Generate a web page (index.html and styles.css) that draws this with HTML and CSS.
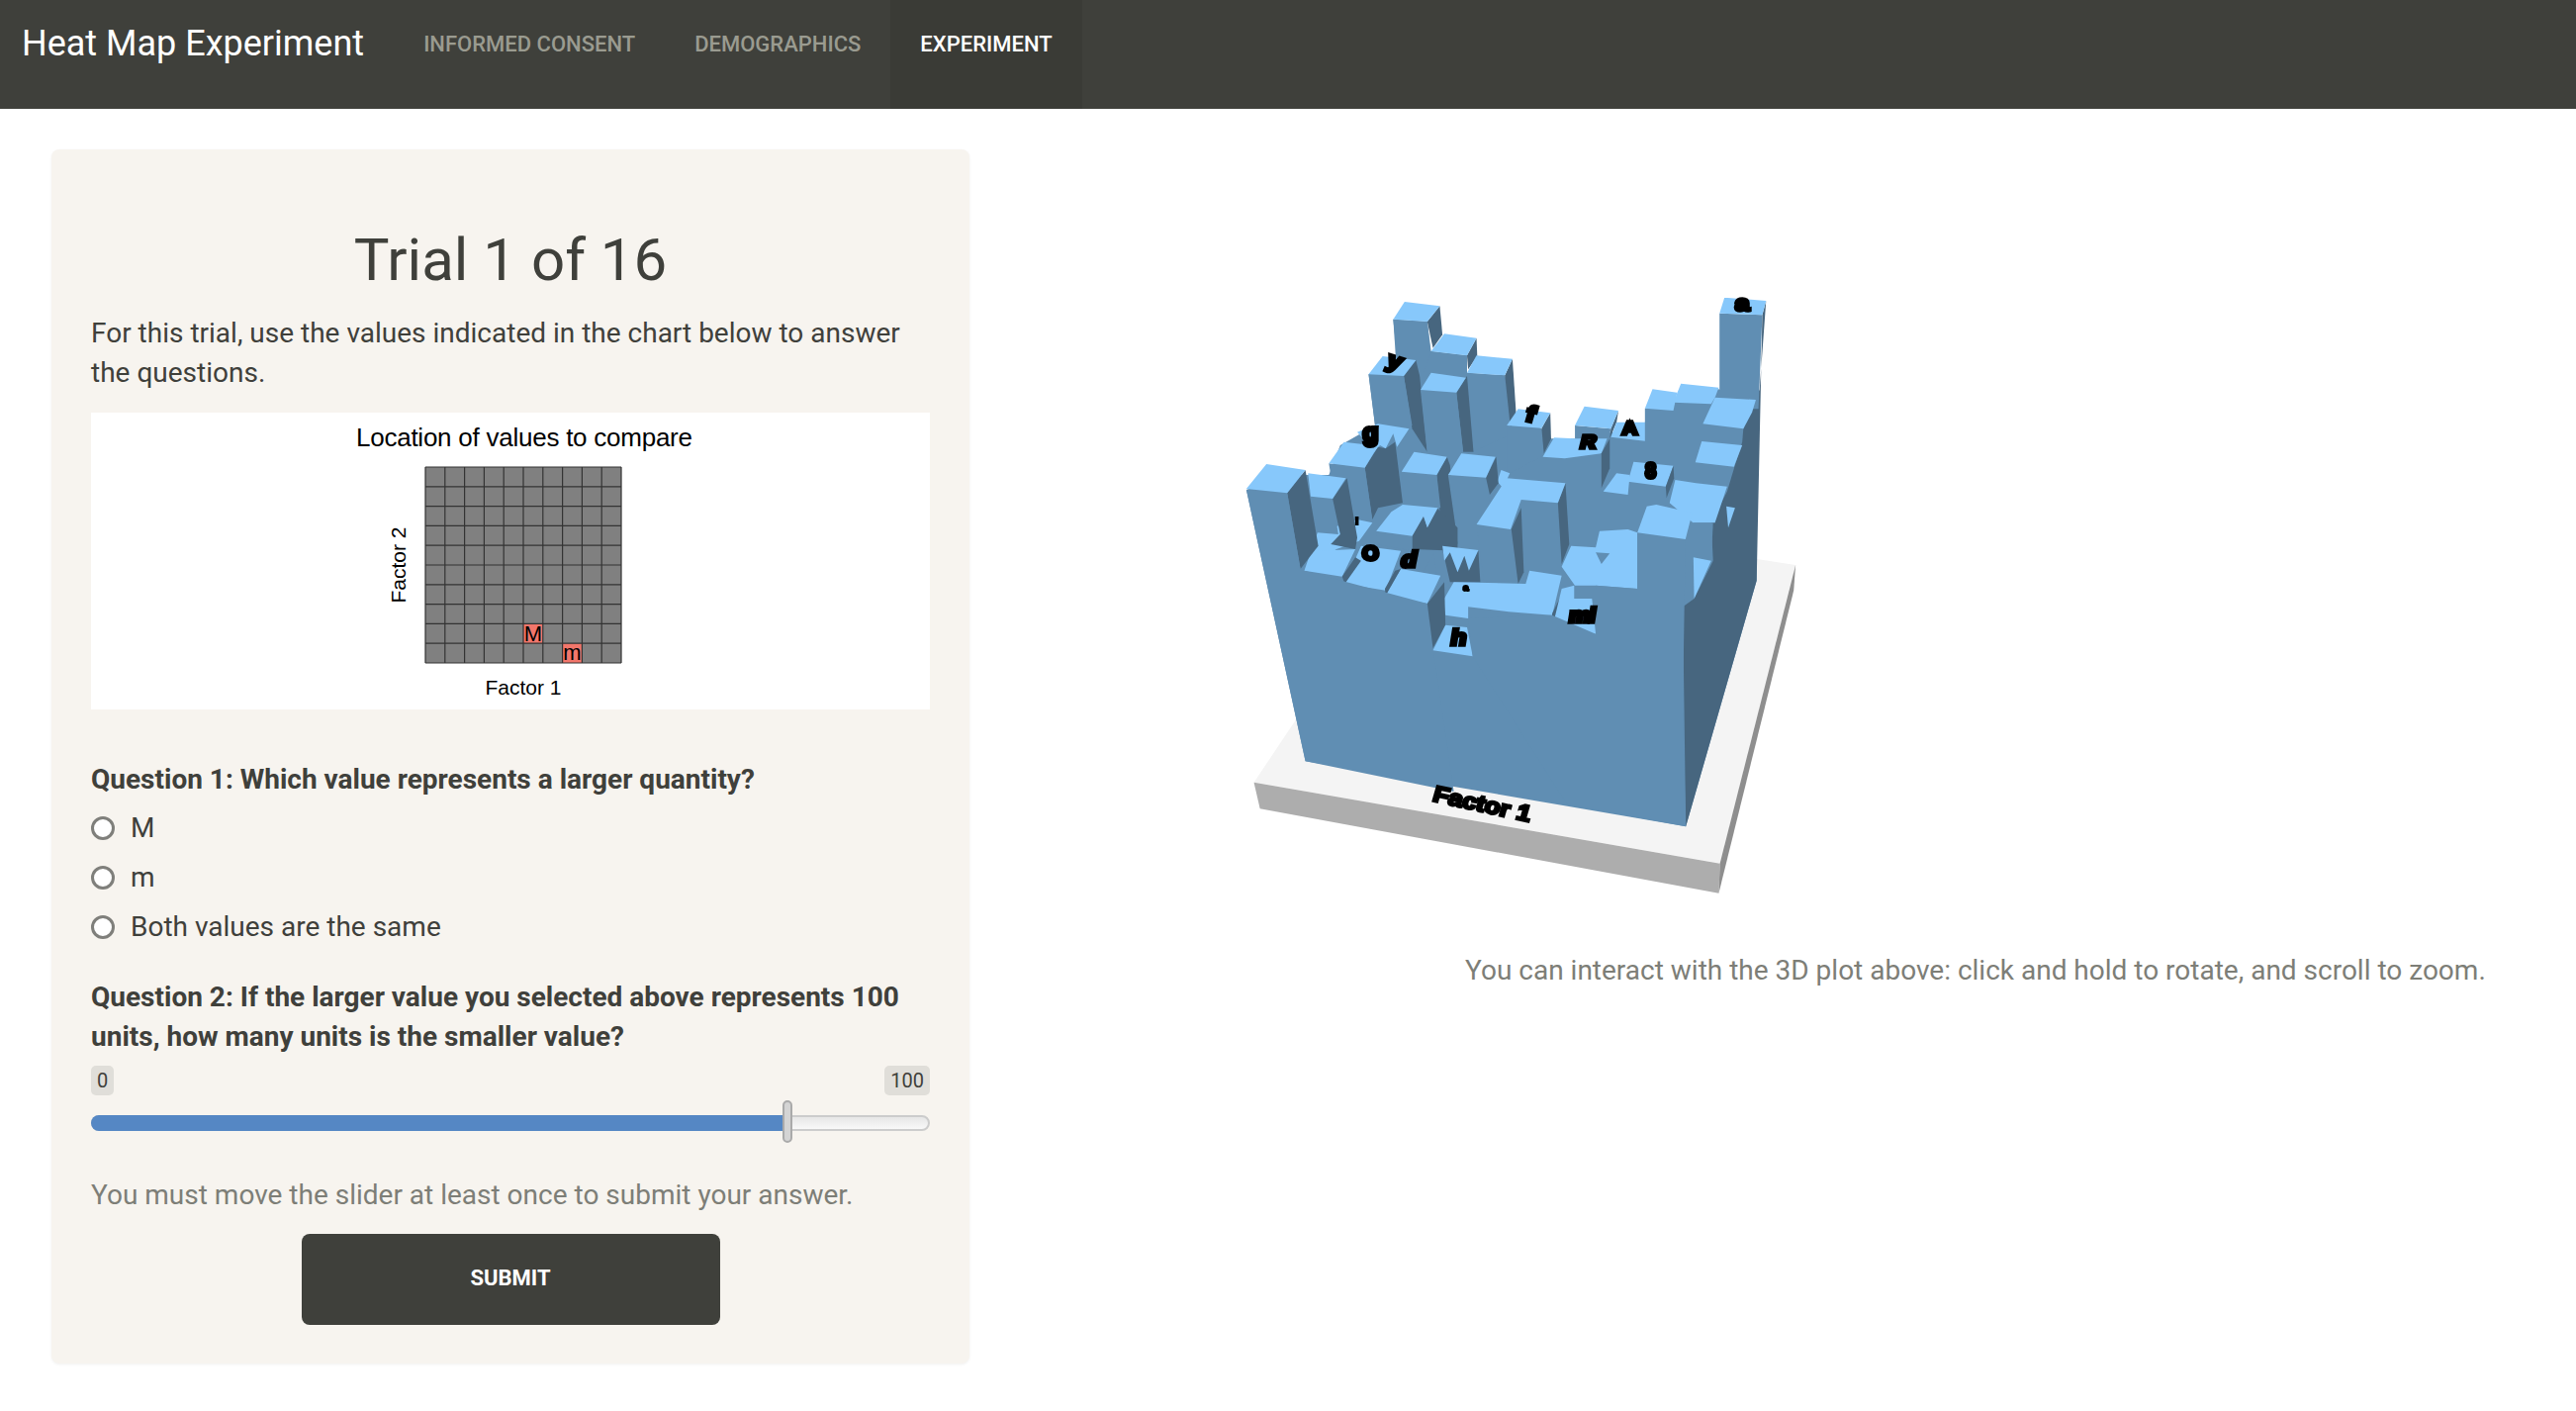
FILE: index.html
```html
<!DOCTYPE html>
<html>
	<head>
		<meta charset="utf-8" />
		<title>Heat Map Experiment</title>
		<link rel="stylesheet" href="styles.css">
	</head>
	<body>
		<div class="topbar">
			<a class="brand" href="#">Heat Map Experiment</a>
			<a class="nav-link" href="#">INFORMED CONSENT</a>
			<a class="nav-link" href="#">DEMOGRAPHICS</a>
			<a class="nav-link active" href="#">EXPERIMENT</a>
		</div>
		<div class="main">
			<div class="card">
				<h1>Trial 1 of 16</h1>
				<p class="intro">For this trial, use the values indicated in the chart below to answer the questions.</p>
				<div class="chart-box">
					<svg class="chart" width="848" height="300" viewBox="0 0 848 300">
						<text class="chart-title" x="268" y="34" textLength="340">Location of values to compare</text>
						<rect x="338" y="55" width="198" height="198" fill="#808080"/>
						<rect x="437" y="213.4" width="19.8" height="19.8" fill="#f2766b"/>
						<rect x="476.6" y="233.2" width="19.8" height="19.8" fill="#f2766b"/>
						<path class="grid-lines" d="M338 55V253M357.8 55V253M377.6 55V253M397.4 55V253M417.2 55V253M437 55V253M456.8 55V253M476.6 55V253M496.4 55V253M516.2 55V253M536 55V253M338 55H536M338 74.8H536M338 94.6H536M338 114.4H536M338 134.2H536M338 154H536M338 173.8H536M338 193.6H536M338 213.4H536M338 233.2H536M338 253H536"/>
						<text class="chart-cell" x="446.9" y="231">M</text>
						<text class="chart-cell" x="486.5" y="250">m</text>
						<text class="chart-axis" x="437" y="285">Factor 1</text>
						<text class="chart-axis" transform="translate(318 154) rotate(-90)">Factor 2</text>
					</svg>
				</div>
				<div class="question q1">Question 1: Which value represents a larger quantity?</div>
				<div class="options">
					<label class="option"><input type="radio" name="q1"> M</label>
					<label class="option"><input type="radio" name="q1"> m</label>
					<label class="option"><input type="radio" name="q1"> Both values are the same</label>
				</div>
				<div class="question q2">Question 2: If the larger value you selected above represents 100 units, how many units is the smaller value?</div>
				<div class="slider-labels">
					<span>0</span>
					<span>100</span>
				</div>
				<div class="slider">
					<div class="slider-fill" style="width:82.8%"></div>
					<div class="slider-handle" style="left:82.6%"></div>
				</div>
				<p class="hint">You must move the slider at least once to submit your answer.</p>
				<button class="submit">SUBMIT</button>
			</div>
			<div class="plot-col">
				<svg class="plot" width="600" height="640" viewBox="0 0 1568 1920" preserveAspectRatio="none">
					<defs>
						<filter id="soft" x="-5%" y="-5%" width="110%" height="110%"><feGaussianBlur stdDeviation="1.6"/></filter>
					</defs>
					<g filter="url(#soft)">
						<!-- base -->
						<polygon fill="#f4f4f4" points="72,1532 190,1330 1400,855 1503,873 1303,1778"/>
						<polygon fill="#adadad" points="72,1532 1303,1778 1300,1868 88,1612"/>
						<polygon fill="#8e8e8e" points="1503,873 1498,950 1300,1868 1303,1778"/>

						<!-- interior mass -->
						<polygon class="f" points="450,240 440,128 530,135 540,225 635,238 635,290 735,298 765,420 830,458 857,490 920,490 1020,470 1105,440 1105,398 1180,380 1200,340 1300,340 1400,400 1400,920 1213,1666 208,1468 52,645 160,600 270,600 300,510 392,450 375,295"/>
						<polygon class="s" points="1425,72 1415,115 1400,920 1213,1666 1205,1000 1235,975 1285,860 1280,745 1322,650 1343,570 1362,500 1365,460 1398,372 1408,340"/>

						<!-- back row -->
						<polygon class="f" points="1302,110 1415,115 1405,400 1302,400"/>
						<polygon class="t" points="1315,62 1425,72 1415,115 1302,110"/>
						<polygon class="f" points="440,128 530,135 545,300 450,300"/>
						<polygon class="s" points="563,88 530,135 545,215 570,175"/>
						<polygon class="t" points="470,75 563,88 530,135 440,128"/>
						<polygon class="f" points="540,225 635,238 635,290 520,290"/>
						<polygon class="s" points="660,185 635,238 638,280 662,240"/>
						<polygon class="t" points="575,172 660,185 635,238 540,225"/>
						<polygon class="f" points="635,290 735,298 745,480 650,530"/>
						<polygon class="s" points="755,248 735,298 750,460 765,420"/>
						<polygon class="t" points="660,238 755,248 735,298 635,290"/>
						<polygon class="s" points="500,252 468,300 490,460 530,530 510,300"/>
						<polygon class="f" points="375,295 468,300 490,450 392,450"/>
						<polygon class="t" points="412,240 500,252 468,300 375,295"/>
						<polygon class="s" points="632,305 607,350 625,530 652,530 635,300"/>
						<polygon class="f" points="512,342 607,350 625,535 530,535"/>
						<polygon class="t" points="540,290 632,305 607,350 512,342"/>

						<!-- second row -->
						<polygon class="t" points="345,470 400,445 482,460 450,515 440,475 420,520 405,510 390,530"/>
						<polygon class="s" points="400,515 365,578 385,735 400,700 465,685 445,500 420,520"/>
						<polygon class="f" points="270,565 365,578 385,740 295,740"/>
						<polygon class="t" points="310,500 400,512 365,578 270,565"/>
						<polygon class="f" points="740,450 832,458 838,540 740,600"/>
						<polygon class="s" points="855,412 832,458 838,535 857,490"/>
						<polygon class="t" points="770,400 855,412 832,458 740,450"/>
						<polygon class="f" points="920,450 1015,460 1010,490 920,490"/>
						<polygon class="s" points="1035,405 1015,460 1012,490 1030,440"/>
						<polygon class="t" points="945,392 1035,405 1015,460 920,450"/>
						<polygon class="t" points="1030,440 1105,440 1105,497 1015,485"/>
						<polygon class="t" points="865,487 920,490 1005,490 990,535 893,550 835,545"/>
						<polygon class="s" points="1012,490 990,535 990,640 1012,580"/>
						<polygon class="t" points="1125,340 1190,350 1180,405 1105,398"/>
						<polygon class="t" points="1200,323 1300,335 1290,365 1280,385 1180,380"/>
						<polygon class="t" points="1290,365 1398,372 1388,410 1365,460 1258,445"/>
						<polygon class="t" points="1255,498 1362,510 1340,575 1238,562"/>
						<polygon class="t" points="1075,560 1180,572 1160,635 1060,620"/>
						<polygon class="s" points="1180,572 1160,635 1162,670 1182,610"/>
						<polygon class="t" points="1030,595 1065,600 1060,660 995,650"/>
						<polygon class="t" points="1185,615 1240,625 1322,635 1290,745 1232,745 1170,685"/>
						<polygon class="f" points="1232,745 1285,745 1280,860 1232,850"/>
						<polygon class="t" points="1320,695 1343,700 1325,760"/>
						<polygon class="t" points="725,585 748,595 730,640 715,620"/>

						<!-- third row -->
						<polygon class="s" points="582,545 555,600 565,740 610,810 590,570"/>
						<polygon class="f" points="462,590 555,600 565,700 470,700"/>
						<polygon class="t" points="495,530 582,545 555,600 462,590"/>
						<polygon class="f" points="585,600 685,608 695,690 610,800"/>
						<polygon class="s" points="712,545 685,608 695,660 718,625"/>
						<polygon class="t" points="620,535 710,545 685,608 585,600"/>
						<polygon class="f" points="778,675 875,685 885,890 780,930"/>
						<polygon class="f" points="660,750 750,765 768,930 680,930"/>
						<polygon class="s" points="895,625 875,685 885,870 905,810"/>
						<polygon class="s" points="778,700 752,765 770,930 785,895"/>
						<polygon class="t" points="740,610 895,625 875,685 778,675 750,765 660,750"/>

						<!-- left cluster -->
						<polygon class="t" points="240,775 345,735 385,745 350,800 290,825 205,890"/>
						<polygon class="f" points="222,665 280,672 295,780 240,775"/>
						<polygon class="s" points="318,610 280,672 300,780 275,810 340,825 345,790"/>
						<polygon class="t" points="215,595 315,610 280,672 222,665"/>
						<polygon class="s" points="520,725 490,785 490,825 610,830 610,760 555,700 530,760"/>
						<polygon class="f" points="395,770 490,785 490,830 395,810"/>
						<polygon class="t" points="395,770 435,712 465,690 558,700 530,760 520,725 490,785"/>

						<!-- teeth -->
						<polygon class="s" points="570,825 665,830 670,925 590,925"/>
						<polygon class="t" points="570,815 665,828 640,890 628,845 610,895 590,835 575,860"/>
						<polygon class="f" points="548,838 555,905 515,900"/>

						<!-- front row -->
						<polygon class="t" points="240,830 340,825 305,908 205,890"/>
						<polygon class="t" points="355,815 460,830 420,950 312,930"/>
						<polygon class="t" points="460,885 565,905 530,990 420,965"/>
						<polygon class="s" points="355,860 312,930 305,908 340,850"/>
						<polygon class="s" points="460,885 420,965 418,945 445,890"/>
						<polygon class="s" points="208,585 160,655 195,885 242,815"/>
						<polygon class="f" points="52,645 160,655 195,885 205,890 530,990 545,1125 600,1560 208,1468"/>
						<polygon class="t" points="105,567 208,585 160,655 52,642"/>

						<!-- middle stair -->
						<polygon class="t" points="600,925 790,930 800,890 885,905 860,1025 745,1015 638,1000 638,1035 578,1025 572,980"/>
						<polygon class="s" points="575,925 530,990 545,1125 578,1055"/>
						<polygon class="t" points="578,1055 635,1062 650,1150 545,1132"/>
						<polygon class="s" points="890,950 860,1065 860,1020"/>
						<polygon class="t" points="885,945 918,935 918,975 965,975 975,1082 860,1065"/>
						<polygon class="t" points="985,770 1060,765 1085,775 1085,945 975,935 920,935 885,878 910,815 975,820"/>
						<polygon class="f" points="975,835 1012,838 990,870"/>
						<polygon class="f" points="1085,775 1212,795 1205,1300 1213,1666 900,1600 650,1150 638,1035 860,1025 975,1082 975,935 1085,945"/>
						<polygon class="t" points="1135,690 1230,715 1212,795 1085,775 1110,695"/>
						<polygon class="t" points="1233,850 1280,860 1235,975"/>

						<!-- labels -->
						<text class="bar-label" transform="translate(1362 102)">a</text>
						<text class="bar-label" transform="translate(437 276) rotate(20)">y</text>
						<text class="bar-label" transform="translate(798 438) rotate(14)">f</text>
						<text class="bar-label caps" transform="translate(1065 478)">A</text>
						<text class="bar-label caps" transform="translate(952 520) skewX(-12)">R</text>
						<text class="bar-label caps" transform="translate(1120 608) scale(.9 1.15)">8</text>
						<text class="bar-label" transform="translate(380 498) scale(1 1.1)">g</text>
						<text class="bar-label caps" transform="translate(380 858) scale(1 1.1)">O</text>
						<text class="bar-label" transform="translate(478 880) skewX(-10)">d</text>
						<text class="bar-label small" transform="translate(632 950)">a</text>
						<text class="bar-label small" transform="translate(344 750)">i</text>
						<text class="bar-label tight" transform="translate(935 1046) skewX(-8)">mi</text>
						<text class="bar-label" transform="translate(610 1115) skewX(-8)">h</text>
						<text class="base-label" transform="translate(670 1620) rotate(14)">Factor 1</text>
					</g>
				</svg>
				<p class="caption">You can interact with the 3D plot above: click and hold to rotate, and scroll to zoom.</p>
			</div>
		</div>
	</body>
</html>
```

FILE: styles.css
```css
html,body{margin:0;padding:0}
body{
	background:#fff;
	color:#3f403b;
	font-family:Roboto,"Liberation Sans",sans-serif;
	font-size:28px;
	line-height:40px;
}
p{margin:0}
.topbar{
	display:flex;
	height:110px;
	background:#3f403b;
}
.brand{
	padding:0 30px 0 22px;
	color:#fff;
	font-size:36px;
	line-height:88px;
	text-decoration:none;
}
.nav-link{
	padding:0 30px;
	color:#9a9b90;
	font-size:22px;
	font-weight:500;
	line-height:90px;
	text-decoration:none;
}
.nav-link.active{
	background:#3a3b36;
	color:#fff;
}
.main{
	display:flex;
	padding:41px 52px 48px;
}
.card{
	width:848px;
	padding:40px 40px 39px;
	background:#f7f4ef;
	border-radius:8px;
	box-shadow:0 1px 3px rgba(0,0,0,.06);
}
h1{
	margin:39px 0 21px;
	font-size:60px;
	font-weight:400;
	line-height:66px;
	text-align:center;
}
.chart-box{
	height:300px;
	margin-top:20px;
	background:#fff;
}
.chart{display:block}
.chart-title{
	font-family:"Liberation Sans",sans-serif;
	font-size:26px;
}
.chart-cell{
	font-family:"Liberation Sans",sans-serif;
	font-size:22px;
	text-anchor:middle;
}
.chart-axis{
	font-family:"Liberation Sans",sans-serif;
	font-size:21px;
	text-anchor:middle;
}
.grid-lines{
	fill:none;
	stroke:#333;
	stroke-width:1.2;
}
.question{
	font-weight:700;
}
.q1{margin-top:51px}
.q2{margin-top:26px}
.options{margin-top:4px}
.option{
	display:flex;
	align-items:center;
	gap:16px;
	height:50px;
}
.option input{
	appearance:none;
	box-sizing:border-box;
	width:24px;
	height:24px;
	margin:0;
	background:#fff;
	border:3px solid #7f7f7b;
	border-radius:50%;
}
.slider-labels{
	display:flex;
	justify-content:space-between;
	margin-top:9px;
}
.slider-labels span{
	height:30px;
	padding:0 6px;
	background:#e0ded9;
	border-radius:5px;
	font-size:20px;
	line-height:30px;
}
.slider{
	position:relative;
	box-sizing:border-box;
	height:16px;
	margin-top:20px;
	background:linear-gradient(#e6e6e6,#f8f8f8);
	border:2px solid #ccc;
	border-radius:8px;
}
.slider-fill{
	position:absolute;
	top:-2px;
	bottom:-2px;
	left:-2px;
	background:#5587c4;
	border-radius:8px 0 0 8px;
}
.slider-handle{
	position:absolute;
	top:-17px;
	box-sizing:border-box;
	width:10px;
	height:43px;
	background:#d4d4d4;
	border:2px solid #aaa;
	border-radius:5px;
}
.hint{
	margin-top:45px;
	color:#7d7e77;
}
.submit{
	display:block;
	width:423px;
	height:92px;
	margin:19px auto 0;
	padding:0 0 4px;
	background:#3f403b;
	border:0;
	border-radius:8px;
	color:#fff;
	font-family:Roboto,"Liberation Sans",sans-serif;
	font-size:22px;
	font-weight:700;
}
.plot-col{
	margin-left:260px;
	padding-top:129px;
}
.plot{display:block}
.caption{
	margin:41px 0 0 241px;
	color:#7d7e77;
	white-space:nowrap;
}
.f{fill:#608eb3}
.s{fill:#47667f}
.t{fill:#87c8fb}
.bar-label{
	font-family:"Liberation Sans",sans-serif;
	font-size:68px;
	font-weight:700;
	text-anchor:middle;
	stroke:#000;
	stroke-width:11;
}
.bar-label.caps{
	font-size:56px;
}
.bar-label.tight{
	font-size:64px;
	letter-spacing:-4px;
}
.bar-label.small{
	font-size:26px;
	stroke-width:6;
}
.base-label{
	font-family:"Liberation Sans",sans-serif;
	font-size:68px;
	font-weight:700;
	text-anchor:middle;
	stroke:#000;
	stroke-width:8;
}
```
